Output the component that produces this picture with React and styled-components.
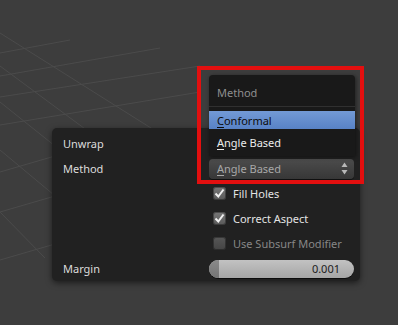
import React from 'react';
import styled, {createGlobalStyle} from 'styled-components';

const Global = createGlobalStyle`
  html, body {
    margin: 0;
    padding: 0;
    background: #3d3d3d;
  }
  body {
    font-family: "Noto Sans", "DejaVu Sans", sans-serif;
    font-size: 11px;
  }
`;

const Viewport = styled.div`
  position: relative;
  width: 398px;
  height: 325px;
  overflow: hidden;
  background: #3d3d3d;
  box-sizing: border-box;
  padding: 128px 0 0 52px;
`;

const Floor = styled.svg`
  position: absolute;
  left: 0;
  top: 0;
`;

const Panel = styled.div`
  position: relative;
  width: 308px;
  height: 153px;
  box-sizing: border-box;
  padding: 3px 6px 0 11px;
  background: #212121;
  border-radius: 5px;
  box-shadow: 0 2px 6px rgba(0, 0, 0, 0.55);
  display: grid;
  grid-template-columns: 146px 145px;
  grid-auto-rows: 25px;
  align-items: center;
`;

const Label = styled.div`
  color: #dcdcdc;
  line-height: 14px;
`;

const Field = styled.div`
  height: 20px;
  box-sizing: border-box;
  padding: 0 6px 0 8px;
  border-radius: 4px;
  background: linear-gradient(#4c4c4c, #373737);
  box-shadow: 0 1px 0 rgba(0, 0, 0, 0.5);
  color: #a8a8a8;
  display: flex;
  align-items: center;
  justify-content: space-between;
`;

const Accel = styled.span`
  text-decoration: underline;
  text-underline-offset: 2px;
`;

const CheckRow = styled.label`
  display: flex;
  align-items: center;
  gap: 7px;
  padding-left: 4px;
  color: ${(props) => props.disabled ? '#878787' : '#e4e4e4'};
`;

const Box = styled.span`
  width: 13px;
  height: 13px;
  border-radius: 3px;
  background: ${(props) => props.disabled
    ? 'linear-gradient(#575757, #444)'
    : 'linear-gradient(#777, #5a5a5a)'};
  box-shadow: inset 0 0 0 1px rgba(0, 0, 0, 0.35);
  display: flex;
  align-items: center;
  justify-content: center;
`;

const Slider = styled.div`
  position: relative;
  height: 18px;
  border-radius: 9px;
  overflow: hidden;
  background: linear-gradient(#c2c2c2, #a6a6a6);
  box-shadow: 0 1px 0 rgba(0, 0, 0, 0.6);
  display: flex;
  align-items: center;
  justify-content: flex-end;
  padding-right: 14px;
  color: #1c1c1c;
`;

const SliderFill = styled.span`
  position: absolute;
  left: 0;
  top: 0;
  bottom: 0;
  width: 10px;
  background: linear-gradient(#8a8a8a, #747474);
`;

const Menu = styled.div`
  position: absolute;
  left: 209px;
  top: 75px;
  width: 146px;
  height: 81px;
  background: #191919;
  border-radius: 4px 4px 0 0;
  box-shadow: 1px 1px 4px rgba(0, 0, 0, 0.5);
  display: flex;
  flex-direction: column;
`;

const MenuTitle = styled.div`
  height: 32px;
  box-sizing: border-box;
  padding: 3px 0 0 8px;
  border-bottom: 1px solid #303030;
  color: #8e8e8e;
  display: flex;
  align-items: center;
`;

const MenuItem = styled.div`
  height: ${(props) => props.active ? '18px' : '24px'};
  margin-top: ${(props) => props.active ? '4px' : '1px'};
  padding: 1px 0 0 8px;
  box-sizing: border-box;
  display: flex;
  align-items: center;
  color: ${(props) => props.active ? '#0c0c0c' : '#ececec'};
  background: ${(props) => props.active ? 'linear-gradient(#739ad6, #5882c6)' : 'transparent'};
`;

const Highlight = styled.div`
  position: absolute;
  left: 197px;
  top: 66px;
  width: 167px;
  height: 118px;
  box-sizing: border-box;
  border: 4px solid #e30f0f;
`;

const Check = () => (
  <svg width="11" height="11" viewBox="0 0 11 11">
    <polyline points="1.5,5.5 4.3,8.5 9.5,1.5" fill="none" stroke="#f0f0f0" strokeWidth="2" />
  </svg>
);

const Arrows = () => (
  <svg width="7" height="13" viewBox="0 0 7 13">
    <polygon points="3.5,0.5 6.5,5 0.5,5" fill="#b8b8b8" />
    <polygon points="3.5,12.5 6.5,8 0.5,8" fill="#b8b8b8" />
  </svg>
);

const floorLines = [
  [0, 33, 170, 140],
  [0, 66, 100, 140],
  [0, 102, 60, 150],
  [0, 150, 60, 200],
  [0, 212, 45, 258],
  [0, 53, 70, 40],
  [0, 76, 160, 48],
  [0, 97, 200, 66],
  [0, 125, 200, 92],
  [0, 172, 55, 156],
  [0, 212, 55, 196],
  [0, 260, 55, 244],
];

export default function App() {
  return (
    <>
      <Global />
      <Viewport>
        <Floor width="398" height="325">
          {floorLines.map(([x1, y1, x2, y2], i) => (
            <line key={i} x1={x1} y1={y1} x2={x2} y2={y2} stroke="#4b4b4b" strokeWidth="1" />
          ))}
        </Floor>
        <Panel>
          <Label>Unwrap</Label>
          <span />
          <Label>Method</Label>
          <Field>
            <span><Accel>A</Accel>ngle Based</span>
            <Arrows />
          </Field>
          <span />
          <CheckRow><Box><Check /></Box>Fill Holes</CheckRow>
          <span />
          <CheckRow><Box><Check /></Box>Correct Aspect</CheckRow>
          <span />
          <CheckRow disabled><Box disabled />Use Subsurf Modifier</CheckRow>
          <Label>Margin</Label>
          <Slider><SliderFill />0.001</Slider>
        </Panel>
        <Menu>
          <MenuTitle>Method</MenuTitle>
          <MenuItem active><span><Accel>C</Accel>onformal</span></MenuItem>
          <MenuItem><span><Accel>A</Accel>ngle Based</span></MenuItem>
        </Menu>
        <Highlight />
      </Viewport>
    </>
  );
}
